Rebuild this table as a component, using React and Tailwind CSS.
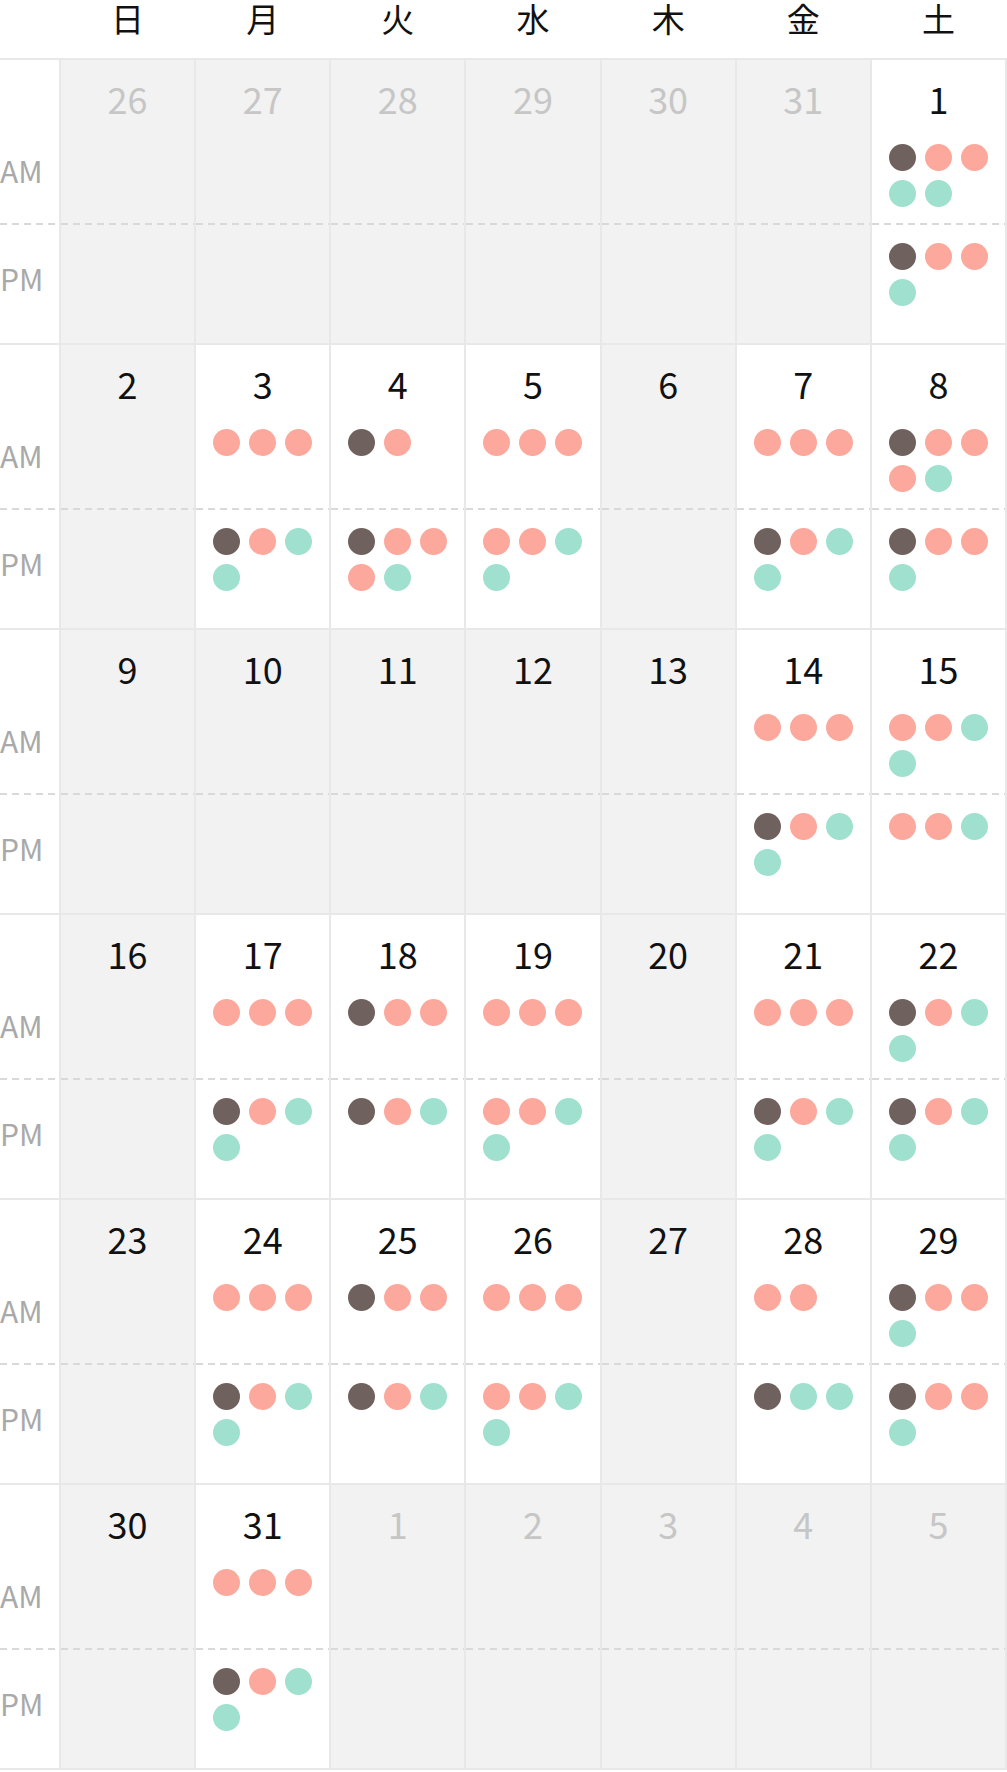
const DAYS = ['日', '月', '火', '水', '木', '金', '土'];

const DOT = {
  d: 'bg-[#6f615d]',
  s: 'bg-[#fca89c]',
  t: 'bg-[#9fe0cf]',
};

// o: other month, am/pm: reservation dots (d=dark, s=salmon, t=teal)
const weeks = [
  [
    { n: 26, o: true }, { n: 27, o: true }, { n: 28, o: true }, { n: 29, o: true },
    { n: 30, o: true }, { n: 31, o: true }, { n: 1, am: 'dsstt', pm: 'dsst' },
  ],
  [
    { n: 2 }, { n: 3, am: 'sss', pm: 'dstt' }, { n: 4, am: 'ds', pm: 'dssst' },
    { n: 5, am: 'sss', pm: 'sstt' }, { n: 6 }, { n: 7, am: 'sss', pm: 'dstt' },
    { n: 8, am: 'dssst', pm: 'dsst' },
  ],
  [
    { n: 9 }, { n: 10 }, { n: 11 }, { n: 12 }, { n: 13 },
    { n: 14, am: 'sss', pm: 'dstt' }, { n: 15, am: 'sstt', pm: 'sst' },
  ],
  [
    { n: 16 }, { n: 17, am: 'sss', pm: 'dstt' }, { n: 18, am: 'dss', pm: 'dst' },
    { n: 19, am: 'sss', pm: 'sstt' }, { n: 20 }, { n: 21, am: 'sss', pm: 'dstt' },
    { n: 22, am: 'dstt', pm: 'dstt' },
  ],
  [
    { n: 23 }, { n: 24, am: 'sss', pm: 'dstt' }, { n: 25, am: 'dss', pm: 'dst' },
    { n: 26, am: 'sss', pm: 'sstt' }, { n: 27 }, { n: 28, am: 'ss', pm: 'dtt' },
    { n: 29, am: 'dsst', pm: 'dsst' },
  ],
  [
    { n: 30 }, { n: 31, am: 'sss', pm: 'dstt' }, { n: 1, o: true }, { n: 2, o: true },
    { n: 3, o: true }, { n: 4, o: true }, { n: 5, o: true },
  ],
];

function Dashed() {
  return <div className="h-[2px] bg-[image:repeating-linear-gradient(90deg,#d9d9d9_0_7px,transparent_7px_12px)]" />;
}

function Dots({ code }) {
  if (!code) return null;
  return (
    <div className="grid grid-cols-[repeat(3,27px)] justify-center gap-[9px]">
      {code.split('').map((c, i) => (
        <span key={i} className={`block h-[27px] w-[27px] rounded-full ${DOT[c]}`} />
      ))}
    </div>
  );
}

function DayCell({ day }) {
  const open = !!(day.am || day.pm);
  return (
    <div className={`flex flex-col ${open ? 'bg-white' : 'bg-[#f2f2f2]'}`}>
      <div className="h-[163px]">
        <p className={`pt-[20px] text-center text-[36px] leading-none ${day.o ? 'text-[#c6c6c6]' : 'text-[#111]'}`}>
          {day.n}
        </p>
        <div className="mt-[28px]">
          <Dots code={day.am} />
        </div>
      </div>
      <Dashed />
      <div className="flex-1 pt-[18px]">
        <Dots code={day.pm} />
      </div>
    </div>
  );
}

export default function App() {
  return (
    <div className="w-[1007px] bg-white font-['Noto_Sans_CJK_JP',sans-serif]">
      <div className="grid h-[60px] w-[1007px] grid-cols-[59px_repeat(7,1fr)] gap-x-[2px] border-b-2 border-[#e8e8e8] pr-[2px]">
        <div />
        {DAYS.map((d) => (
          <div key={d} className="pt-[2px] text-center text-[33px] leading-none text-[#111]">
            {d}
          </div>
        ))}
      </div>

      {weeks.map((week, wi) => (
        <div
          key={wi}
          className="grid h-[285px] w-[1007px] grid-cols-[59px_repeat(7,1fr)] gap-x-[2px] bg-[#e8e8e8] pb-[2px] pr-[2px]"
        >
          <div className="flex flex-col bg-white text-[30px] leading-none text-[#a9a9a9]">
            <div className="h-[163px] pt-[95px]">AM</div>
            <Dashed />
            <div className="flex-1 pt-[38px]">PM</div>
          </div>
          {week.map((day, di) => (
            <DayCell key={di} day={day} />
          ))}
        </div>
      ))}
    </div>
  );
}
